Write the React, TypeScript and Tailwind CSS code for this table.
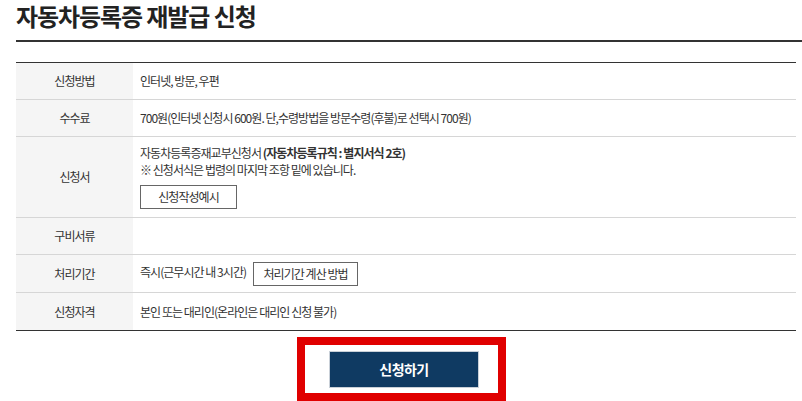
import React from "react";

function Th({ children }: { children: React.ReactNode }) {
  return (
    <div className="w-[117px] shrink-0 bg-[#f5f5f5] flex items-center justify-center text-[#333]">
      {children}
    </div>
  );
}

function SmallBtn({ children, px }: { children: React.ReactNode; px: string }) {
  return (
    <span className={"inline-flex items-center justify-center h-[24px] border border-[#666] bg-white text-[#333] " + px}>
      {children}
    </span>
  );
}

export default function App() {
  return (
    <main
      className="w-[802px] h-[401px] overflow-hidden bg-white pl-[16px] text-[12px] tracking-[-0.08em]"
      style={{ fontFamily: '"Noto Sans CJK KR", "Noto Sans", sans-serif' }}
    >
      <h1 className="pt-[1px] pb-[9px] text-[24px] font-bold text-[#222] tracking-[-0.045em] leading-[30px]">
        자동차등록증 재발급 신청
      </h1>
      <div className="h-[2px] bg-[#333]" />

      <div className="mt-[20px] mr-[6px] border-t border-[#333] border-b text-[#333]">
        <div className="flex h-[37px] border-b border-[#d6d6d6]">
          <Th>신청방법</Th>
          <div className="flex items-center pl-[7px]">인터넷, 방문, 우편</div>
        </div>
        <div className="flex h-[37px] border-b border-[#d6d6d6]">
          <Th>수수료</Th>
          <div className="flex items-center pl-[7px]">
            700원(인터넷 신청시 600원. 단,수령방법을 방문수령(후불)로 선택시 700원)
          </div>
        </div>
        <div className="flex h-[81px] border-b border-[#d6d6d6]">
          <Th>신청서</Th>
          <div className="flex flex-col pl-[7px] pt-[7px]">
            <div className="leading-[17px]">
              자동차등록증재교부신청서 <span className="font-bold">(자동차등록규칙 : 별지서식 2호)</span>
            </div>
            <div className="leading-[17px]">※ 신청서식은 법령의 마지막 조항 밑에 있습니다.</div>
            <div className="mt-[7px]">
              <SmallBtn px="w-[97px]">신청작성예시</SmallBtn>
            </div>
          </div>
        </div>
        <div className="flex h-[37px] border-b border-[#d6d6d6]">
          <Th>구비서류</Th>
          <div className="flex-1" />
        </div>
        <div className="flex h-[38px] border-b border-[#d6d6d6]">
          <Th>처리기간</Th>
          <div className="flex items-center pl-[7px] gap-[7px]">
            <span className="-mt-[4px]">즉시(근무시간 내 3시간)</span>
            <SmallBtn px="w-[105px]">처리기간 계산 방법</SmallBtn>
          </div>
        </div>
        <div className="flex h-[37px]">
          <Th>신청자격</Th>
          <div className="flex items-center pl-[7px]">본인 또는 대리인(온라인은 대리인 신청 불가)</div>
        </div>
      </div>

      <div className="flex justify-center mt-[6px]">
        <div className="border-[8px] border-[#e00000] pl-[24px] pr-[19px] pt-[6px] pb-[5px] mr-[15px]">
          <div className="w-[150px] h-[37px] bg-[#0f3a62] border border-[#c9d0d8] flex items-center justify-center text-white text-[14px] font-bold tracking-[-0.04em]">
            신청하기
          </div>
        </div>
      </div>
    </main>
  );
}
